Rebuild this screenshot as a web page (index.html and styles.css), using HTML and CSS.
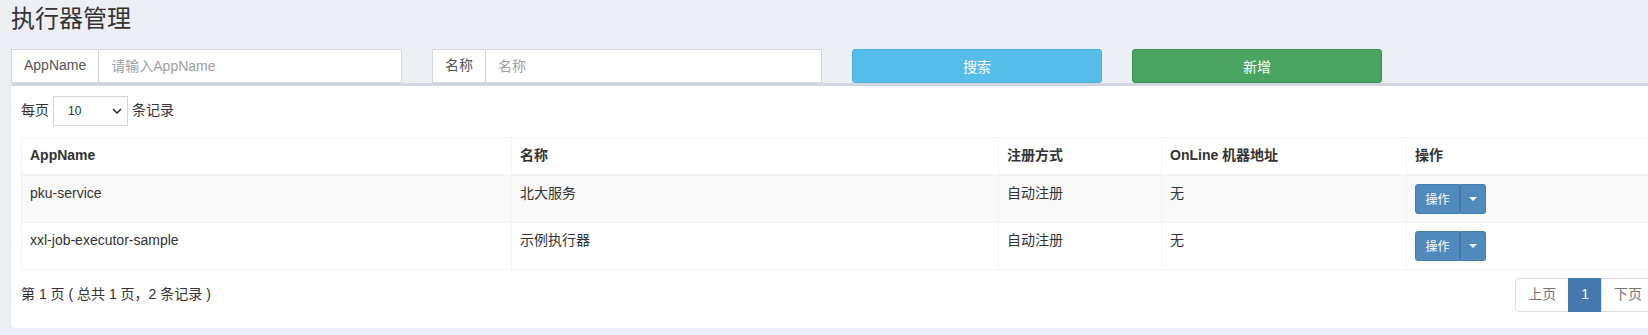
FILE: index.html
```html
<!DOCTYPE html>
<html>
<head>
    <meta charset="utf-8">
    <title>执行器管理</title>
    <link rel="stylesheet" href="styles.css">
</head>
<body>
    <div class="content-wrapper">
        <h1 class="page-title">执行器管理</h1>

        <div class="filter-row">
            <div class="input-group col-input">
                <span class="addon">AppName</span>
                <input type="text" placeholder="请输入AppName">
            </div>
            <div class="input-group col-input-2">
                <span class="addon">名称</span>
                <input type="text" placeholder="名称">
            </div>
            <button class="btn btn-info col-btn">搜索</button>
            <button class="btn btn-success col-btn">新增</button>
        </div>

        <div class="box">
            <div class="length-bar">
                每页
                <span class="select-wrap">
                    <select>
                        <option>10</option>
                        <option>25</option>
                        <option>50</option>
                    </select>
                    <svg class="chevron" width="10" height="6" viewBox="0 0 10 6">
                        <path d="M1 1 L5 5 L9 1" fill="none" stroke="#333" stroke-width="1.6"/>
                    </svg>
                </span>
                条记录
            </div>

            <table class="data-table">
                <colgroup>
                    <col style="width: 490px">
                    <col style="width: 487px">
                    <col style="width: 163px">
                    <col style="width: 245px">
                    <col style="width: 249px">
                </colgroup>
                <thead>
                    <tr>
                        <th>AppName</th>
                        <th>名称</th>
                        <th>注册方式</th>
                        <th>OnLine 机器地址</th>
                        <th>操作</th>
                    </tr>
                </thead>
                <tbody>
                    <tr class="odd">
                        <td>pku-service</td>
                        <td>北大服务</td>
                        <td>自动注册</td>
                        <td>无</td>
                        <td>
                            <div class="btn-group">
                                <button class="btn-op">操作</button>
                                <button class="btn-caret"><span class="caret"></span></button>
                            </div>
                        </td>
                    </tr>
                    <tr>
                        <td>xxl-job-executor-sample</td>
                        <td>示例执行器</td>
                        <td>自动注册</td>
                        <td>无</td>
                        <td>
                            <div class="btn-group">
                                <button class="btn-op">操作</button>
                                <button class="btn-caret"><span class="caret"></span></button>
                            </div>
                        </td>
                    </tr>
                </tbody>
            </table>

            <div class="table-footer">
                <div class="info">第 1 页 ( 总共 1 页，2 条记录 )</div>
                <ul class="pagination">
                    <li class="disabled"><a>上页</a></li>
                    <li class="active"><a>1</a></li>
                    <li class="disabled"><a>下页</a></li>
                </ul>
            </div>
        </div>
    </div>
</body>
</html>
```

FILE: styles.css
```css
* {
    margin: 0;
    padding: 0;
    box-sizing: border-box;
}

body {
    background: #ecf0f5;
    font-family: "Liberation Sans", "Noto Sans CJK SC", sans-serif;
    font-size: 14px;
    line-height: 1.42857;
    color: #333;
    overflow: hidden;
}

.content-wrapper {
    padding: 6px 0 0 11px;
    width: 1680px;
}

.page-title {
    font-size: 24px;
    font-weight: 400;
    line-height: 26px;
    color: #333;
}

/* search bar */
.filter-row {
    display: flex;
    gap: 30px;
    margin-top: 17px;
}

.col-input {
    width: 391px;
}

.col-input-2 {
    width: 390px;
}

.col-btn {
    width: 250px;
}

.input-group {
    display: flex;
    height: 34px;
    border: 1px solid #d2d6de;
    background: white;
}

.addon {
    padding: 6px 12px;
    color: #555;
    border-right: 1px solid #d2d6de;
    white-space: nowrap;
}

.input-group input {
    flex: 1;
    min-width: 0;
    border: none;
    padding: 6px 12px;
    font-family: inherit;
    font-size: 14px;
    color: #555;
    outline: none;
}

.input-group input::placeholder {
    color: #a0a0a0;
}

.btn {
    height: 34px;
    border: 1px solid transparent;
    border-radius: 3px;
    color: white;
    font-family: inherit;
    font-size: 14px;
    cursor: pointer;
}

.btn-info {
    background: #56bce9;
    border-color: #4cb0dd;
}

.btn-success {
    background: #49a462;
    border-color: #3e8f55;
}

/* box */
.box {
    width: 1654px;
    background: white;
    border-top: 3px solid #d2d6de;
    border-radius: 3px;
    box-shadow: 0 1px 1px rgba(0, 0, 0, 0.1);
    padding: 10px 10px 16px;
}

.length-bar {
    height: 30px;
    display: flex;
    align-items: center;
    gap: 4px;
}

.select-wrap {
    position: relative;
    display: inline-block;
}

.select-wrap select {
    appearance: none;
    width: 75px;
    height: 30px;
    border: 1px solid #d2d6de;
    background: white;
    padding: 0 14px;
    font-family: inherit;
    font-size: 12px;
    color: #333;
}

.chevron {
    position: absolute;
    right: 6px;
    top: 12px;
    pointer-events: none;
}

.data-table {
    width: 1634px;
    table-layout: fixed;
    border-collapse: collapse;
    margin-top: 11px;
    border: 1px solid #f4f4f4;
}

.data-table th,
.data-table td {
    border: 1px solid #f4f4f4;
    padding: 8px;
    text-align: left;
    vertical-align: top;
}

.data-table th {
    font-weight: bold;
    border-bottom-width: 2px;
}

.data-table tr.odd td {
    background: #f9f9f9;
}

.btn-group {
    display: inline-flex;
}

.btn-op,
.btn-caret {
    height: 30px;
    background: #518bbd;
    border: 1px solid #457fb1;
    color: white;
    font-family: inherit;
    font-size: 12px;
}

.btn-op {
    width: 45px;
    border-radius: 3px 0 0 3px;
}

.btn-caret {
    width: 26px;
    border-left: 1px solid #3f74a3;
    border-radius: 0 3px 3px 0;
    display: flex;
    align-items: center;
    justify-content: center;
}

.caret {
    width: 0;
    height: 0;
    border-left: 4px solid transparent;
    border-right: 4px solid transparent;
    border-top: 4px solid white;
}

/* footer */
.table-footer {
    display: flex;
    justify-content: space-between;
    align-items: center;
    margin-top: 8px;
}

.pagination {
    list-style: none;
    display: flex;
}

.pagination li a {
    display: block;
    padding: 6px 12px;
    border: 1px solid #ddd;
    margin-left: -1px;
    color: #777;
    background: white;
}

.pagination li:first-child a {
    margin-left: 0;
    border-radius: 4px 0 0 4px;
}

.pagination li:last-child a {
    border-radius: 0 4px 4px 0;
}

.pagination li.active a {
    background: #4478ae;
    border-color: #4478ae;
    color: white;
}
```
